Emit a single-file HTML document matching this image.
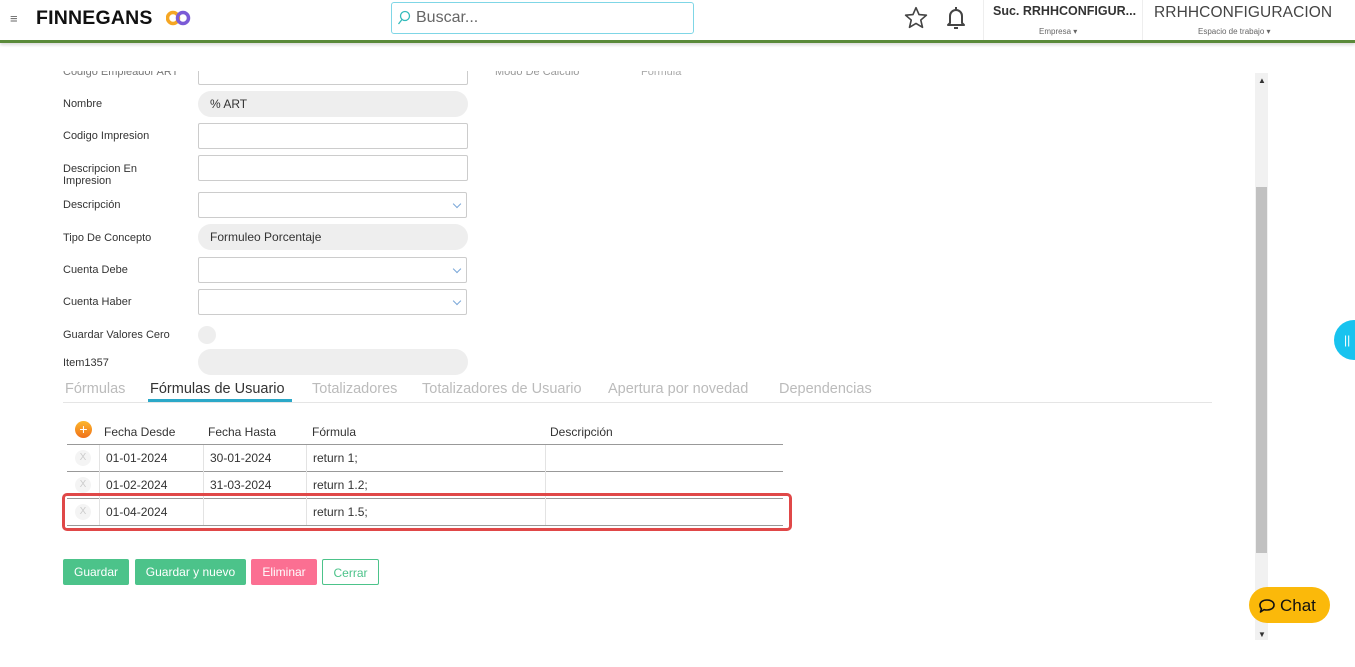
<!DOCTYPE html>
<html><head><meta charset="utf-8"><style>
*{box-sizing:border-box;margin:0;padding:0}
body{width:1355px;height:667px;overflow:hidden;background:#fff;font-family:"Liberation Sans",sans-serif;position:relative;color:#333}
.abs{position:absolute}
.hdr{left:0;top:0;width:1355px;height:43px;background:#fff;border-bottom:3px solid #5a8a3a;box-shadow:0 2px 3px rgba(0,0,0,.15)}
.lbl{position:absolute;left:63px;font-size:11px;color:#333;line-height:12px}
.inp{position:absolute;left:198px;width:270px;height:26px;border:1px solid #ccc;border-radius:2px;background:#fff}
.ro{position:absolute;left:198px;width:270px;height:26px;border-radius:13px;background:#eee;font-size:12px;line-height:26px;padding-left:12px;color:#333}
.sel:after{content:"";position:absolute;right:6px;top:8px;width:5px;height:5px;border-right:1px solid #7aa7d8;border-bottom:1px solid #7aa7d8;transform:rotate(45deg)}
.tab{position:absolute;top:381px;font-size:14.5px;color:#bbb}
td{font-size:12px;color:#333}
.btn{position:absolute;top:559px;height:26px;font-size:12px;line-height:26px;text-align:center;color:#fff;border-radius:2px}
</style></head><body>
<div class="lbl" style="top:66px;color:#777">Codigo Empleador ART</div>
<div class="inp" style="top:58px;height:27px"></div>
<div class="abs" style="left:495px;top:66px;font-size:11px;color:#999">Modo De Calculo</div>
<div class="abs" style="left:641px;top:66px;font-size:11px;color:#aaa">Formula</div>
<div class="abs" style="left:0;top:44px;width:1250px;height:27px;background:#fff"></div>
<div class="abs hdr"></div>
<div class="abs" style="left:10px;top:11px;color:#666;font-size:13px">≡</div>
<div class="abs" style="left:36px;top:7px;font-size:19.5px;font-weight:bold;color:#111;letter-spacing:.2px">FINNEGANS</div>
<svg class="abs" style="left:166px;top:10px" width="25" height="16"><circle cx="7" cy="8" r="5.5" fill="none" stroke="#f5a623" stroke-width="3.5"/><circle cx="17" cy="8" r="5.5" fill="none" stroke="#7b5bd6" stroke-width="3.5"/></svg>
<div class="abs" style="left:391px;top:2px;width:303px;height:32px;border:1px solid #7fd6e6;border-radius:3px"></div>
<svg class="abs" style="left:397px;top:10px" width="14" height="16"><circle cx="8" cy="6" r="4.5" fill="none" stroke="#3bb" stroke-width="1.3"/><line x1="5" y1="9.5" x2="1.5" y2="14" stroke="#3bb" stroke-width="1.3"/></svg>
<div class="abs" style="left:416px;top:9px;font-size:16px;color:#666">Buscar...</div>
<svg class="abs" style="left:903px;top:5px" width="26" height="26" viewBox="0 0 24 24"><path d="M12 2.5l2.8 6.3 6.8.6-5.2 4.5 1.6 6.7L12 17l-6 3.6 1.6-6.7-5.2-4.5 6.8-.6z" fill="none" stroke="#444" stroke-width="1.5" stroke-linejoin="round"/></svg>
<svg class="abs" style="left:944px;top:5px" width="24" height="26" viewBox="0 0 24 26"><path d="M6 18V11a6 6 0 0 1 12 0v7l2 2H4z" fill="none" stroke="#444" stroke-width="2" stroke-linejoin="round"/><path d="M12 2v3M10 23h4" stroke="#444" stroke-width="2"/></svg>
<div class="abs" style="left:983px;top:0;width:1px;height:40px;background:#eee"></div>
<div class="abs" style="left:1142px;top:0;width:1px;height:40px;background:#eee"></div>
<div class="abs" style="left:993px;top:4px;font-size:12.5px;font-weight:bold;color:#333">Suc. RRHHCONFIGUR...</div>
<div class="abs" style="left:1039px;top:27px;font-size:8px;color:#666">Empresa ▾</div>
<div class="abs" style="left:1154px;top:4px;font-size:15.5px;color:#444;letter-spacing:.1px">RRHHCONFIGURACION</div>
<div class="abs" style="left:1198px;top:27px;font-size:8px;color:#666">Espacio de trabajo ▾</div>

<div class="lbl" style="top:98px">Nombre</div><div class="ro" style="top:91px">% ART</div>
<div class="lbl" style="top:130px">Codigo Impresion</div><div class="inp" style="top:123px"></div>
<div class="lbl" style="top:163px">Descripcion En<br>Impresion</div><div class="inp" style="top:155px"></div>
<div class="lbl" style="top:199px">Descripción</div><div class="inp sel" style="top:192px;width:269px"></div>
<div class="lbl" style="top:232px">Tipo De Concepto</div><div class="ro" style="top:224px">Formuleo Porcentaje</div>
<div class="lbl" style="top:264px">Cuenta Debe</div><div class="inp sel" style="top:257px;width:269px"></div>
<div class="lbl" style="top:296px">Cuenta Haber</div><div class="inp sel" style="top:289px;width:269px"></div>
<div class="lbl" style="top:329px">Guardar Valores Cero</div><div class="abs" style="left:198px;top:326px;width:18px;height:18px;border-radius:50%;background:#eee"></div>
<div class="lbl" style="top:357px">Item1357</div><div class="ro" style="top:349px"></div>

<div class="tab" style="left:65px">Fórmulas</div>
<div class="tab" style="left:150px;color:#333">Fórmulas de Usuario</div>
<div class="abs" style="left:148px;top:399px;width:144px;height:3px;background:#2ba8c8"></div>
<div class="tab" style="left:312px">Totalizadores</div>
<div class="tab" style="left:422px">Totalizadores de Usuario</div>
<div class="tab" style="left:608px">Apertura por novedad</div>
<div class="tab" style="left:779px">Dependencias</div>
<div class="abs" style="left:63px;top:402px;width:1149px;height:1px;background:#e5e5e5"></div>

<div class="abs" style="left:75px;top:421px;width:17px;height:17px;border-radius:50%;background:linear-gradient(#fcb72c,#f0701a);color:#fff;font-size:14px;line-height:16px;text-align:center">+</div>
<div class="abs" style="left:104px;top:425px;font-size:12px">Fecha Desde</div>
<div class="abs" style="left:208px;top:425px;font-size:12px">Fecha Hasta</div>
<div class="abs" style="left:312px;top:425px;font-size:12px">Fórmula</div>
<div class="abs" style="left:550px;top:425px;font-size:12px">Descripción</div>
<div class="abs" style="left:67px;top:444px;width:716px;height:1px;background:#999"></div>
<div class="abs" style="left:67px;top:471px;width:716px;height:1px;background:#999"></div>
<div class="abs" style="left:67px;top:498px;width:716px;height:1px;background:#999"></div>
<div class="abs" style="left:67px;top:525px;width:716px;height:1px;background:#999"></div>
<div class="abs" style="left:99px;top:445px;width:1px;height:80px;background:#e3e3e3"></div>
<div class="abs" style="left:203px;top:445px;width:1px;height:80px;background:#e3e3e3"></div>
<div class="abs" style="left:306px;top:445px;width:1px;height:80px;background:#e3e3e3"></div>
<div class="abs" style="left:545px;top:445px;width:1px;height:80px;background:#e3e3e3"></div>
<div class="abs" style="left:75px;top:450px;width:16px;height:16px;border-radius:50%;background:#f4f4f4;color:#ccc;font-size:10px;line-height:16px;text-align:center">X</div>
<div class="abs" style="left:75px;top:477px;width:16px;height:16px;border-radius:50%;background:#f4f4f4;color:#ccc;font-size:10px;line-height:16px;text-align:center">X</div>
<div class="abs" style="left:75px;top:504px;width:16px;height:16px;border-radius:50%;background:#f4f4f4;color:#ccc;font-size:10px;line-height:16px;text-align:center">X</div>
<div class="abs" style="left:106px;top:451px;font-size:12px">01-01-2024</div>
<div class="abs" style="left:210px;top:451px;font-size:12px">30-01-2024</div>
<div class="abs" style="left:313px;top:451px;font-size:12px">return 1;</div>
<div class="abs" style="left:106px;top:478px;font-size:12px">01-02-2024</div>
<div class="abs" style="left:210px;top:478px;font-size:12px">31-03-2024</div>
<div class="abs" style="left:313px;top:478px;font-size:12px">return 1.2;</div>
<div class="abs" style="left:106px;top:505px;font-size:12px">01-04-2024</div>
<div class="abs" style="left:313px;top:505px;font-size:12px">return 1.5;</div>
<div class="abs" style="left:62px;top:493px;width:730px;height:38px;border:3px solid #e04848;border-radius:5px"></div>

<div class="btn" style="left:63px;width:66px;background:#4cc38a">Guardar</div>
<div class="btn" style="left:135px;width:111px;background:#4cc38a">Guardar y nuevo</div>
<div class="btn" style="left:251px;width:66px;background:#fb6f92">Eliminar</div>
<div class="btn" style="left:322px;width:57px;border:1px solid #4cc38a;color:#4cc38a;background:#fff">Cerrar</div>

<div class="abs" style="left:1255px;top:73px;width:13px;height:567px;background:#f1f1f1"></div>
<div class="abs" style="left:1256px;top:187px;width:11px;height:366px;background:#c1c1c1"></div>
<div class="abs" style="left:1258px;top:76px;font-size:8px;color:#333">▲</div>
<div class="abs" style="left:1258px;top:630px;font-size:8px;color:#333">▼</div>
<div class="abs" style="left:1334px;top:320px;width:40px;height:40px;border-radius:50%;background:#18c3ef;color:#fff;font-size:12px;line-height:40px;padding-left:10px">||</div>
<div class="abs" style="left:1249px;top:587px;width:81px;height:36px;border-radius:18px;background:#fbb90a;font-size:17px;line-height:37px;color:#111;padding-left:31px">Chat</div>
<svg class="abs" style="left:1258px;top:598px" width="18" height="16" viewBox="0 0 18 16"><path d="M9 2c4 0 7 2 7 5s-3 5-7 5c-1 0-2 0-3-.4L2.5 14l1-3.2C2.5 9.8 2 8.5 2 7c0-3 3-5 7-5z" fill="none" stroke="#111" stroke-width="1.6" stroke-linejoin="round"/></svg>
</body></html>
